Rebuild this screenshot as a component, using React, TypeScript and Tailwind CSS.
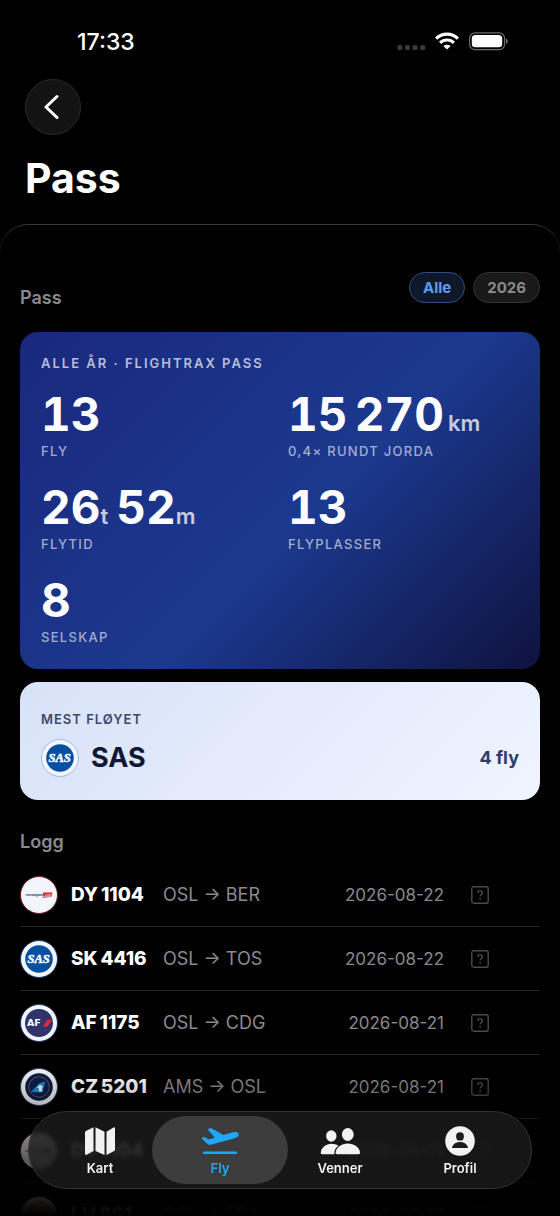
import { useState } from 'react'
import type { ReactNode } from 'react'

type Airline = 'DY' | 'SK' | 'AF' | 'CZ' | 'LH'

interface Flight {
  id: number
  airline: Airline
  number: string
  from: string
  to: string
  date: string
}

const FLIGHTS: Flight[] = [
  { id: 1, airline: 'DY', number: '1104', from: 'OSL', to: 'BER', date: '2026-08-22' },
  { id: 2, airline: 'SK', number: '4416', from: 'OSL', to: 'TOS', date: '2026-08-22' },
  { id: 3, airline: 'AF', number: '1175', from: 'OSL', to: 'CDG', date: '2026-08-21' },
  { id: 4, airline: 'CZ', number: '5201', from: 'AMS', to: 'OSL', date: '2026-08-21' },
  { id: 5, airline: 'DY', number: '1104', from: 'OSL', to: 'BER', date: '2026-08-21' },
  { id: 6, airline: 'LH', number: '861', from: 'OSL', to: 'FRA', date: '2026-08-21' },
]

const YEARS = ['Alle', '2026']

const RING: Record<Airline, string> = {
  DY: 'border-[#7a1a20]',
  SK: 'border-[#1c3a6b]',
  AF: 'border-[#24356b]',
  CZ: 'border-[#3a4654]',
  LH: 'border-[#4a4420]',
}

function LogoArt({ airline }: { airline: Airline }) {
  switch (airline) {
    case 'DY':
      return (
        <>
          <text x="4.6" y="18.8" fontSize="3.3" fontWeight="700" fontFamily="Inter, sans-serif" fill="#3c4a7a">norwegian</text>
          <path d="M22 15.400h9.400l-.6 4.200H22z" fill="#e0232e" />
          <path d="M22 20.200h7l-8 .9z" fill="#2b3a6e" />
          <text x="23.2" y="18.6" fontSize="3" fontWeight="700" fontFamily="Inter, sans-serif" fill="#f6b9bc">.com</text>
        </>
      )
    case 'SK':
      return (
        <>
          <circle cx="18" cy="18" r="13.8" fill="#0650a4" />
          <text x="17.6" y="22" textAnchor="middle" fontSize="12.500" fontWeight="700" fontStyle="italic" fontFamily="'Liberation Serif', serif" fill="#fff" stroke="#fff" strokeWidth=".5">SAS</text>
        </>
      )
    case 'AF':
      return (
        <>
          <circle cx="18" cy="18" r="14" fill="#30346a" />
          <text x="6" y="21.400" fontSize="9.500" fontWeight="700" fontFamily="'DejaVu Sans', sans-serif" fill="#fff">AF</text>
          <path d="M21.800 21.400 26.400 14.800h4.800l-4.600 6.600z" fill="#ec2430" />
        </>
      )
    case 'CZ':
      return (
        <>
          <circle cx="18" cy="18" r="13.8" fill="#0a1f4e" />
          <circle cx="18" cy="18" r="10.200" fill="none" stroke="#8c5f3c" strokeWidth=".8" />
          <path d="M9.600 23.200 18 14.400l6.200-1.800-2.600 10.600z" fill="#1391d2" />
          <path d="M15.800 18.400l3.200-2.600 3 2-1 1 .2 3.600h-3.400v-3.200z" fill="#f2f6fa" />
        </>
      )
    default:
      return <circle cx="18" cy="18" r="13.8" fill="#c9b458" />
  }
}

function AirlineLogo({ airline, ring }: { airline: Airline; ring?: string }) {
  return (
    <span className={`block size-[38px] shrink-0 overflow-hidden rounded-full border bg-[#f2f5fb] ${ring ?? RING[airline]}`}>
      <svg viewBox="0 0 36 36" className="size-full" aria-hidden="true">
        <LogoArt airline={airline} />
      </svg>
    </span>
  )
}

function StatusBar() {
  return (
    <div className="flex items-center justify-between pt-7 pr-[52px] pb-[23px] pl-[77px]">
      <span className="text-[23px] leading-7 font-medium">17:33</span>
      <div className="flex items-center gap-2">
        <svg viewBox="0 0 30 20" className="h-5 w-[30px]" fill="#3a3a3a" aria-hidden="true">
          <rect x="1.4" y="13" width="5" height="5" rx="1.6" />
          <rect x="9" y="13" width="5" height="5" rx="1.6" />
          <rect x="16.6" y="13" width="5" height="5" rx="1.6" />
          <rect x="24.2" y="13" width="5" height="5" rx="1.6" />
        </svg>
        <svg viewBox="0 0 26 20" className="h-5 w-[26px]" fill="none" stroke="#fff" strokeWidth="3.1" aria-hidden="true">
          <path d="M2.1 6.600a15.600 15.600 0 0 1 21.800 0" />
          <path d="M6.100 10.900a9.800 9.800 0 0 1 13.800 0" />
          <path d="M13 17.600 9.400 14.100a5.200 5.200 0 0 1 7.200 0z" fill="#fff" stroke="none" />
        </svg>
        <svg viewBox="0 0 40 20" className="h-5 w-10" aria-hidden="true">
          <rect x="1.6" y=".9" width="35" height="16.8" rx="5.4" fill="none" stroke="#6b6b6b" strokeWidth="1.2" />
          <rect x="3.8" y="3.1" width="30.4" height="12.2" rx="3.6" fill="#fff" />
          <path d="M38 6.400c2.200.8 2.200 4.800 0 5.600z" fill="#7a7a7a" />
        </svg>
      </div>
    </div>
  )
}

function Stat({ label, children }: { label: string; children: ReactNode }) {
  return (
    <div>
      <dd className="h-[46px] text-[46px] leading-[46px] font-bold whitespace-nowrap tabular-nums">{children}</dd>
      <dt className="mt-1.5 text-[13px] leading-4 font-medium tracking-widest text-white/60">{label}</dt>
    </div>
  )
}

function Unit({ children }: { children: ReactNode }) {
  return <span className="text-[22px] leading-none font-semibold text-white/75">{children}</span>
}

function UnknownSeat() {
  return (
    <svg viewBox="0 0 18 18" className="size-[18px]" fill="none" stroke="#4b4b4d" strokeWidth="1.4" aria-hidden="true">
      <rect x=".8" y=".8" width="16.4" height="16.4" rx="2" />
      <path d="M6.600 6.900c.1-1.500 1.100-2.300 2.400-2.300 1.400 0 2.400.8 2.400 2.100 0 1.800-2.300 1.900-2.300 3.700" />
      <circle cx="9.1" cy="12.900" r=".9" fill="#4b4b4d" stroke="none" />
    </svg>
  )
}

function MapIcon() {
  return (
    <svg viewBox="0 0 38 30" className="h-[30px] w-[38px]" fill="currentColor" aria-hidden="true">
      <path d="M4 6.600Q4 5.600 4.900 5L12.500 1.200V25L5.600 28.800Q4 29.400 4 27.800Z" />
      <path d="M14.500 1.200 23.500 5.800V29L14.500 25Z" />
      <path d="M25.500 5.800 32.500 1.400Q34 .8 34 2.400V23.600Q34 24.600 33.100 25.100L25.500 29Z" />
    </svg>
  )
}

function DepartureIcon() {
  return (
    <svg viewBox="0 0 38 30" className="h-[30px] w-[38px]" fill="currentColor" aria-hidden="true">
      <path d="M.9 12.700c-.3-.6-.1-1 .5-1.200l1.700-.4c.4-.1.700 0 1 .2l3.500 2.100 6.100-1.700L7.200 4c-.4-.600-.2-1.100.4-1.300l2-.5c.5-.1.900-.1 1.300.2l11.700 6.700 8.600-2.700c3-.9 5.900-.5 6.500 1.300.7 2-1.300 3.700-4 4.500L10.600 18.400c-2.300.7-3.500.4-4.700-.9z" />
      <rect x="2" y="25.500" width="34" height="2.600" rx="1" />
    </svg>
  )
}

function FriendsIcon() {
  return (
    <svg viewBox="0 0 42 30" className="h-[30px] w-[42px]" fill="currentColor" aria-hidden="true">
      <ellipse cx="12.300" cy="10" rx="5.200" ry="5.800" />
      <path d="M12.300 17.800c2.700 0 5.100.7 7 1.900-2.800 2-4.400 4.900-3.900 8.500H3.300c-1.300 0-1.700-.8-1.500-2 .8-4.800 5.200-8.400 10.500-8.400z" />
      <ellipse cx="28.800" cy="8.500" rx="5.900" ry="6.500" />
      <path d="M28.800 17.600c6.400 0 11.300 3.800 12.200 8.600.2 1.300-.3 2-1.600 2H18.200c-1.300 0-1.800-.7-1.600-2 .9-4.800 5.800-8.600 12.200-8.600z" />
    </svg>
  )
}

function ProfileIcon() {
  return (
    <svg viewBox="0 0 30 30" className="size-[30px]" aria-hidden="true">
      <circle cx="15" cy="15" r="14.800" fill="currentColor" />
      <ellipse cx="15" cy="10.400" rx="3.900" ry="4.200" fill="#1b1b1b" />
      <path d="M7.600 22c-.6 0-.6-.7-.3-1.500 1-2.700 4-4.500 7.700-4.500s6.700 1.800 7.700 4.500c.3.800.3 1.500-.3 1.500z" fill="#1b1b1b" />
    </svg>
  )
}

const TABS = [
  { name: 'Kart', icon: <MapIcon /> },
  { name: 'Fly', icon: <DepartureIcon /> },
  { name: 'Venner', icon: <FriendsIcon /> },
  { name: 'Profil', icon: <ProfileIcon /> },
]

function TabBar() {
  const [active, setActive] = useState('Fly')

  return (
    <nav className="fixed inset-x-7 bottom-[27px] grid grid-cols-4 rounded-full border border-[#333] bg-[#1b1b1b]/80 px-[11px] py-1 backdrop-blur-[2px]">
      {TABS.map(t => (
        <button
          key={t.name}
          onClick={() => setActive(t.name)}
          className={`-mx-2 flex h-[68px] flex-col items-center rounded-full pt-2.5 ${
            active === t.name ? 'bg-[#3c3c3c] text-[#1fa8fb]' : 'text-[#f2f2f2]'
          }`}
        >
          {t.icon}
          <span className="mt-1 text-[13px] leading-4 font-semibold">{t.name}</span>
        </button>
      ))}
    </nav>
  )
}

export default function App() {
  const [year, setYear] = useState('Alle')

  return (
    <div className="flex h-screen flex-col overflow-hidden bg-black font-[Inter,'Noto_Sans',sans-serif] text-white">
      <StatusBar />

      {/* Header */}
      <header className="px-[25px] pb-[22px]">
        <button
          aria-label="Tilbake"
          className="flex size-14 items-center justify-center rounded-full border border-[#2c2c2c] bg-[#131313]"
        >
          <svg viewBox="0 0 16 26" className="mr-1 h-[26px] w-4" fill="none" stroke="#fff" strokeWidth="3" strokeLinecap="round" strokeLinejoin="round" aria-hidden="true">
            <path d="M14 2.500 3 13l11 10.500" />
          </svg>
        </button>
        <h1 className="mt-[19px] text-[41px] leading-[48px] font-bold">Pass</h1>
      </header>

      <main className="min-h-0 flex-1 overflow-hidden rounded-t-[28px] border-t border-[#3a3a3a] px-5 pt-[47px]">
        {/* Year filter */}
        <div className="flex h-10 items-start justify-between">
          <h2 className="self-end text-lg leading-7 font-semibold text-[#8a8a8e]">Pass</h2>
          <div className="flex gap-2">
            {YEARS.map(y => (
              <button
                key={y}
                onClick={() => setYear(y)}
                className={`h-[31px] rounded-full border px-[13px] text-[15px] leading-5 font-bold ${
                  year === y
                    ? 'border-[#2c4f87] bg-[#0f182a] text-[#5b9cf8]'
                    : 'border-[#343434] bg-[#191919] text-[#8a8a8e]'
                }`}
              >
                {y}
              </button>
            ))}
          </div>
        </div>

        {/* Pass card */}
        <section className="mt-5 rounded-[18px] bg-[linear-gradient(135deg,#1a287d_0%,#1b398e_55%,#0f123f_100%)] px-[21px] pt-[23px] pb-6">
          <h3 className="text-[13px] leading-4 font-semibold tracking-[2px] text-white/70">ALLE ÅR · FLIGHTRAX PASS</h3>
          <dl className="mt-5 grid grid-cols-2 gap-x-4 gap-y-[25px]">
            <Stat label="FLY">13</Stat>
            <Stat label="0,4× RUNDT JORDA">
              15{'\u202f'}270<span className="mr-1" /><Unit>km</Unit>
            </Stat>
            <Stat label="FLYTID">
              26<Unit>t</Unit><span className="mr-2" />52<Unit>m</Unit>
            </Stat>
            <Stat label="FLYPLASSER">13</Stat>
            <Stat label="SELSKAP">8</Stat>
          </dl>
        </section>

        {/* Most flown */}
        <section className="mt-[13px] rounded-[18px] bg-[linear-gradient(135deg,#d8e2f8_0%,#eff4ff_100%)] px-[21px] pt-[29px] pb-[23px] text-[#0f1733]">
          <h3 className="text-[13px] leading-4 font-semibold tracking-[1px] text-[#3d4870]">MEST FLØYET</h3>
          <div className="mt-3 flex items-center">
            <AirlineLogo airline="SK" ring="border-[#9dbcf5]" />
            <span className="ml-3 flex-1 text-[27px] leading-8 font-bold">SAS</span>
            <span className="text-lg leading-7 font-bold text-[#323d68]">4 fly</span>
          </div>
        </section>

        {/* Log */}
        <h2 className="mt-7 text-lg leading-7 font-semibold text-[#8a8a8e]">Logg</h2>
        <ul className="mt-[7px]">
          {FLIGHTS.map(f => (
            <li key={f.id} className="flex h-16 items-center border-b border-[#262626]">
              <AirlineLogo airline={f.airline} />
              <span className="ml-[13px] w-[92px] text-[19px] leading-7 font-extrabold whitespace-nowrap">
                {f.airline}{'\u202f'}{f.number}
              </span>
              <span className="flex-1 text-lg leading-7 whitespace-nowrap text-[#8a8a8e]">
                {f.from} → {f.to}
              </span>
              <span className="mr-[27px] text-[17px] leading-7 text-[#8a8a8e]">{f.date}</span>
              <span className="mr-[51px]">
                <UnknownSeat />
              </span>
            </li>
          ))}
        </ul>
      </main>

      {/* Fade behind the tab bar */}
      <div className="pointer-events-none fixed inset-x-0 bottom-0 h-[150px] bg-linear-to-b from-transparent to-black" />
      <TabBar />
    </div>
  )
}
